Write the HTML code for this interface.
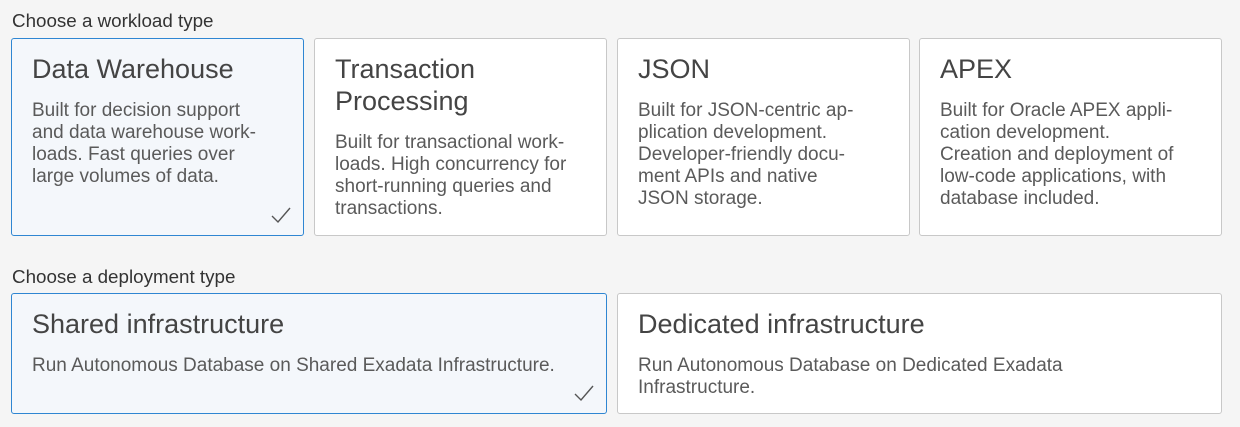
<!DOCTYPE html>
<html><head><style>
body{margin:0;background:#f5f5f5;font-family:"Liberation Sans",sans-serif;width:1240px;height:427px;position:relative;overflow:hidden}
.lbl{position:absolute;left:12px;font-size:18.8px;color:#333}
.card{position:absolute;box-sizing:border-box;background:#fff;border:1px solid #c8c8c8;border-radius:3px;padding:14px 20px}
.card.sel{background:#f4f7fb;border-color:#2f86d2}
.t{font-size:27px;color:#444;line-height:32px;margin-bottom:15px}
.d{font-size:19px;color:#5a5a5a;line-height:22px}
.chk{position:absolute;right:12px;bottom:10px;width:20px;height:20px}
</style></head><body>
<div class="lbl" style="top:10px">Choose a workload type</div>
<div class="card sel" style="left:11px;top:38px;width:293px;height:198px"><div class="t">Data Warehouse</div><div class="d">Built for decision support<br>and data warehouse work-<br>loads. Fast queries over<br>large volumes of data.</div>
<svg class="chk" viewBox="0 0 20 20"><path d="M1 11 L7 17 L19 3" fill="none" stroke="#555" stroke-width="1.4"/></svg></div>
<div class="card" style="left:314px;top:38px;width:293px;height:198px"><div class="t">Transaction<br>Processing</div><div class="d">Built for transactional work-<br>loads. High concurrency for<br>short-running queries and<br>transactions.</div></div>
<div class="card" style="left:617px;top:38px;width:293px;height:198px"><div class="t">JSON</div><div class="d">Built for JSON-centric ap-<br>plication development.<br>Developer-friendly docu-<br>ment APIs and native<br>JSON storage.</div></div>
<div class="card" style="left:919px;top:38px;width:303px;height:198px"><div class="t">APEX</div><div class="d">Built for Oracle APEX appli-<br>cation development.<br>Creation and deployment of<br>low-code applications, with<br>database included.</div></div>
<div class="lbl" style="top:266px">Choose a deployment type</div>
<div class="card sel" style="left:11px;top:293px;width:596px;height:121px"><div class="t">Shared infrastructure</div><div class="d">Run Autonomous Database on Shared Exadata Infrastructure.</div>
<svg class="chk" viewBox="0 0 20 20"><path d="M1 11 L7 17 L19 3" fill="none" stroke="#555" stroke-width="1.4"/></svg></div>
<div class="card" style="left:617px;top:293px;width:605px;height:121px"><div class="t">Dedicated infrastructure</div><div class="d">Run Autonomous Database on Dedicated Exadata<br>Infrastructure.</div></div>
</body></html>
